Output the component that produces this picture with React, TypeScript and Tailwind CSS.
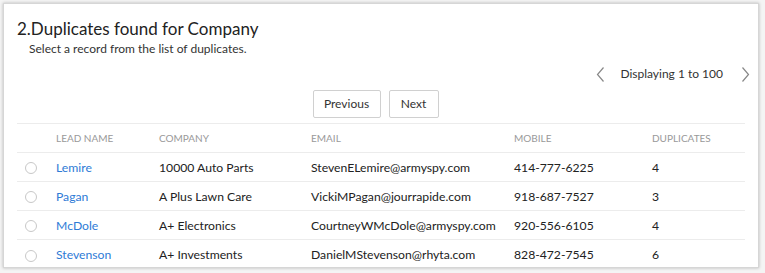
import React from "react";

const rows = [
  { name: "Lemire", company: "10000 Auto Parts", email: "StevenELemire@armyspy.com", mobile: "414-777-6225", dup: "4" },
  { name: "Pagan", company: "A Plus Lawn Care", email: "VickiMPagan@jourrapide.com", mobile: "918-687-7527", dup: "3" },
  { name: "McDole", company: "A+ Electronics", email: "CourtneyWMcDole@armyspy.com", mobile: "920-556-6105", dup: "4" },
  { name: "Stevenson", company: "A+ Investments", email: "DanielMStevenson@rhyta.com", mobile: "828-472-7545", dup: "6" },
];

export default function App() {
  return (
    <div className="w-[765px] h-[273px] bg-[#f4f4f4] pt-[3px] pl-[3px]" style={{ fontFamily: 'Lato, sans-serif' }}>
      <div className="w-[756px] h-[265px] bg-white border border-[#d6d6d6] shadow-[0_0_3px_rgba(0,0,0,0.25)] overflow-hidden">
        <div className="pl-[13px] pt-[14px]">
          <div className="text-[17px] leading-[21px] text-[#222]">2.Duplicates found for Company</div>
          <div className="pl-[12px] text-[12px] leading-[18px] text-[#333] mt-[1px]">Select a record from the list of duplicates.</div>
        </div>
        <div className="flex items-center justify-end pr-[8px] mt-[6px] h-[20px]">
          <svg width="9" height="15" viewBox="0 0 9 15" className="mr-[15px]">
            <path d="M7.5 0.5 L1.5 7.5 L7.5 14.5" fill="none" stroke="#888" strokeWidth="1.2" />
          </svg>
          <span className="text-[12px] text-[#333]">Displaying 1 to 100</span>
          <svg width="9" height="15" viewBox="0 0 9 15" className="ml-[18px]">
            <path d="M1.5 0.5 L7.5 7.5 L1.5 14.5" fill="none" stroke="#888" strokeWidth="1.2" />
          </svg>
        </div>
        <div className="flex justify-center gap-[8px] mt-[6px] pr-[11px]">
          <button className="w-[68px] h-[28px] border border-[#d0d0d0] rounded-[2px] bg-white text-[12px] text-[#333]">Previous</button>
          <button className="w-[50px] h-[28px] border border-[#d0d0d0] rounded-[2px] bg-white text-[12px] text-[#333]">Next</button>
        </div>
        <div className="mx-[13px] mt-[5px] border-t border-[#ececec]">
          <div className="flex items-center h-[29px] pt-[1px] border-b border-[#ececec] text-[10px] text-[#999] uppercase">
            <div className="w-[39px]" />
            <div className="w-[103px]">Lead Name</div>
            <div className="w-[152px]">Company</div>
            <div className="w-[203px]">Email</div>
            <div className="w-[138px]">Mobile</div>
            <div>Duplicates</div>
          </div>
          {rows.map((r, i) => (
            <div key={r.name} className={`flex items-center h-[29px] pt-[2px] text-[12.2px] text-[#222] ${i < rows.length - 1 ? "border-b border-[#ececec]" : ""}`}>
              <div className="w-[39px] pl-[8px]">
                <span className="block w-[12px] h-[12px] rounded-full border border-[#c8c8c8]" />
              </div>
              <div className="w-[103px] text-[#2e7bd6]">{r.name}</div>
              <div className="w-[152px]">{r.company}</div>
              <div className="w-[203px]">{r.email}</div>
              <div className="w-[138px]">{r.mobile}</div>
              <div>{r.dup}</div>
            </div>
          ))}
        </div>
      </div>
    </div>
  );
}
